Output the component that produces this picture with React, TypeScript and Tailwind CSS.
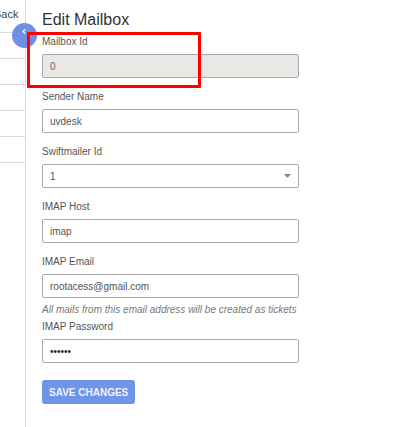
import React from 'react';

// 左側の折りたたまれたリスト（行の区切り線のみ見える）
const SIDE_ROWS = 5;

interface FieldProps {
  label: string;
  children: React.ReactNode;
  className?: string;
}

const Field: React.FC<FieldProps> = ({ label, children, className = '' }) => (
  <div className={`flex flex-col ${className}`}>
    <label className="text-[10px] leading-[12px] text-[#555]">{label}</label>
    <div className="mt-[6px]">{children}</div>
  </div>
);

// 背景色は各入力欄で指定する
const inputBase =
  'block w-[257px] h-[24px] px-[7px] border border-[#aaa] rounded-[2px] text-[10px] outline-none';

const App: React.FC = () => {
  return (
    <div
      className="relative flex min-h-screen bg-white overflow-hidden"
      style={{ fontFamily: '"Liberation Sans", Arial, sans-serif' }}
    >
      {/* サイドバー */}
      <aside className="w-[26px] shrink-0 border-r border-[#d6d6d6] overflow-hidden">
        <div className="h-[33px] border-b border-[#dcdcdc] pt-[8px]">
          <span className="block -ml-[6px] text-[11px] leading-[13px] text-[#444] whitespace-nowrap">Back</span>
        </div>
        {Array.from({ length: SIDE_ROWS }).map((_, i) => (
          <div key={i} className="h-[26px] border-b border-[#dcdcdc]" />
        ))}
      </aside>

      {/* フォーム本体 */}
      <main className="flex-1 pl-[16px] pt-[10px]">
        <h1 className="text-[16px] leading-[20px] text-[#333] font-normal">Edit Mailbox</h1>

        <Field label="Mailbox Id" className="mt-[6px]">
          <input className={`${inputBase} bg-[#e9e8e4] text-[#666]`} value="0" disabled readOnly />
        </Field>

        <Field label="Sender Name" className="mt-[13px]">
          <input className={`${inputBase} bg-white text-[#555]`} defaultValue="uvdesk" />
        </Field>

        <Field label="Swiftmailer Id" className="mt-[13px]">
          <div className="relative w-[257px]">
            <select className={`${inputBase} bg-white text-[#555] appearance-none`} defaultValue="1">
              <option value="1">1</option>
            </select>
            <svg
              className="absolute right-[8px] top-[10px] pointer-events-none"
              width="7"
              height="4"
              viewBox="0 0 7 4"
            >
              <path d="M0 0 L7 0 L3.5 4 Z" fill="#888" />
            </svg>
          </div>
        </Field>

        <Field label="IMAP Host" className="mt-[13px]">
          <input className={`${inputBase} bg-white text-[#555]`} defaultValue="imap" />
        </Field>

        <Field label="IMAP Email" className="mt-[13px]">
          <input className={`${inputBase} bg-white text-[#555]`} defaultValue="rootacess@gmail.com" />
        </Field>
        <p className="mt-[6px] text-[10px] leading-[12px] italic text-[#777] whitespace-nowrap">
          All mails from this email address will be created as tickets
        </p>

        <Field label="IMAP Password" className="mt-[5px]">
          <input type="password" className={`${inputBase} bg-white text-[#222]`} defaultValue="uvdesk" />
        </Field>

        <button className="mt-[17px] h-[24px] px-[7px] rounded-[3px] bg-[#6f95ea] text-[10px] font-bold text-[#eef2fd]">
          SAVE CHANGES
        </button>
      </main>

      {/* 折りたたみボタン */}
      <div className="absolute left-[12px] top-[23px] w-[25px] h-[25px] rounded-full bg-[#6f8fe6] flex justify-center pt-[6px]">
        <svg width="4" height="5" viewBox="0 0 4 5" className="ml-[-1px]">
          <path d="M3.2 0.4 L1 2.5 L3.2 4.6" stroke="#fff" strokeWidth="1.2" fill="none" />
        </svg>
      </div>

      {/* 注釈の赤枠 */}
      <div className="absolute left-[27px] top-[32px] w-[174px] h-[56px] border-[3px] border-[#ff0000] rounded-[1px]" />
    </div>
  );
};

export default App;
